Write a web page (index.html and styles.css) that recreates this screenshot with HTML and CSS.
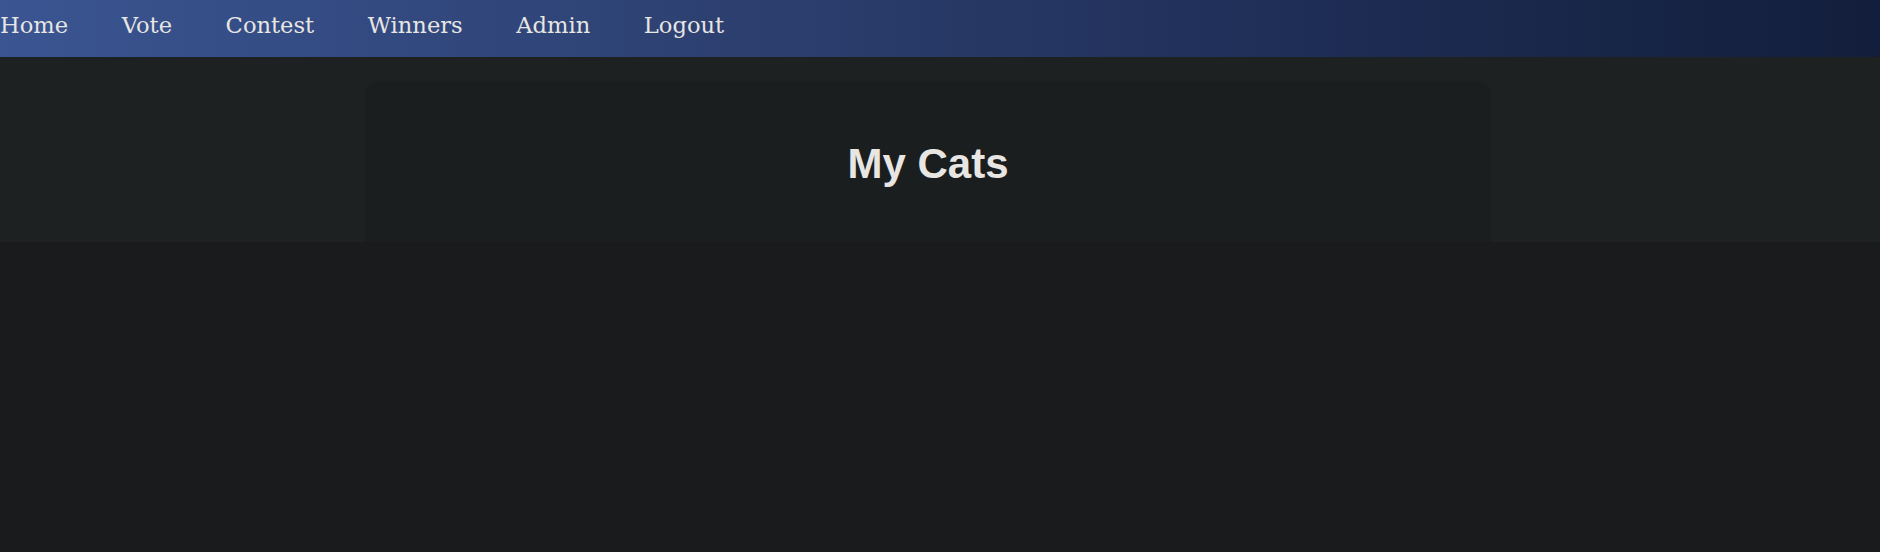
FILE: index.html
```html
<!DOCTYPE html>
<html lang="en">
<head>
<meta charset="utf-8">
<title>My Cats</title>
<link rel="stylesheet" href="styles.css">
</head>
<body>
<nav class="topnav">
  <ul class="nav-list">
    <li><a class="nav-link" href="#">Home</a></li>
    <li><a class="nav-link" href="#">Vote</a></li>
    <li><a class="nav-link" href="#">Contest</a></li>
    <li><a class="nav-link" href="#">Winners</a></li>
    <li><a class="nav-link" href="#">Admin</a></li>
    <li><a class="nav-link" href="#">Logout</a></li>
  </ul>
</nav>
<section class="hero">
  <div class="card">
    <h1 class="title">My Cats</h1>
  </div>
</section>
</body>
</html>
```
FILE: styles.css
```css
html, body {
  margin: 0;
  padding: 0;
}
body {
  background: #1a1b1d;
  color: #e8e6e3;
  font-family: "DejaVu Serif", serif;
  height: 552px;
  overflow: hidden;
}
.topnav {
  height: 57px;
  box-sizing: border-box;
  padding-top: 13px;
  background: linear-gradient(90deg, #3a5592 0%, #2c3f6f 40%, #1e2d55 70%, #121e3b 100%);
  border-bottom-right-radius: 5px;
}
.nav-list {
  list-style: none;
  margin: 0;
  padding: 0;
  display: flex;
  gap: 53.6px;
}
.nav-link {
  color: #e8e6e3;
  text-decoration: none;
  font-family: "DejaVu Serif", serif;
  font-size: 22.6px;
  line-height: 25px;
  display: block;
}
.hero {
  height: 185px;
  background: #1e2122;
  box-sizing: border-box;
  padding-top: 27px;
  overflow: hidden;
}
.card {
  margin-left: 368px;
  width: 1120px;
  height: 200px;
  background: #1b1e1f;
  border-radius: 10px;
  box-shadow: 0 0 5px rgba(0, 0, 0, 0.3);
  box-sizing: border-box;
  padding-top: 56px;
}
.title {
  margin: 0;
  text-align: center;
  font-family: "Liberation Sans", Arial, sans-serif;
  font-weight: bold;
  font-size: 42px;
  line-height: 48px;
  color: #e8e6e3;
}
```
